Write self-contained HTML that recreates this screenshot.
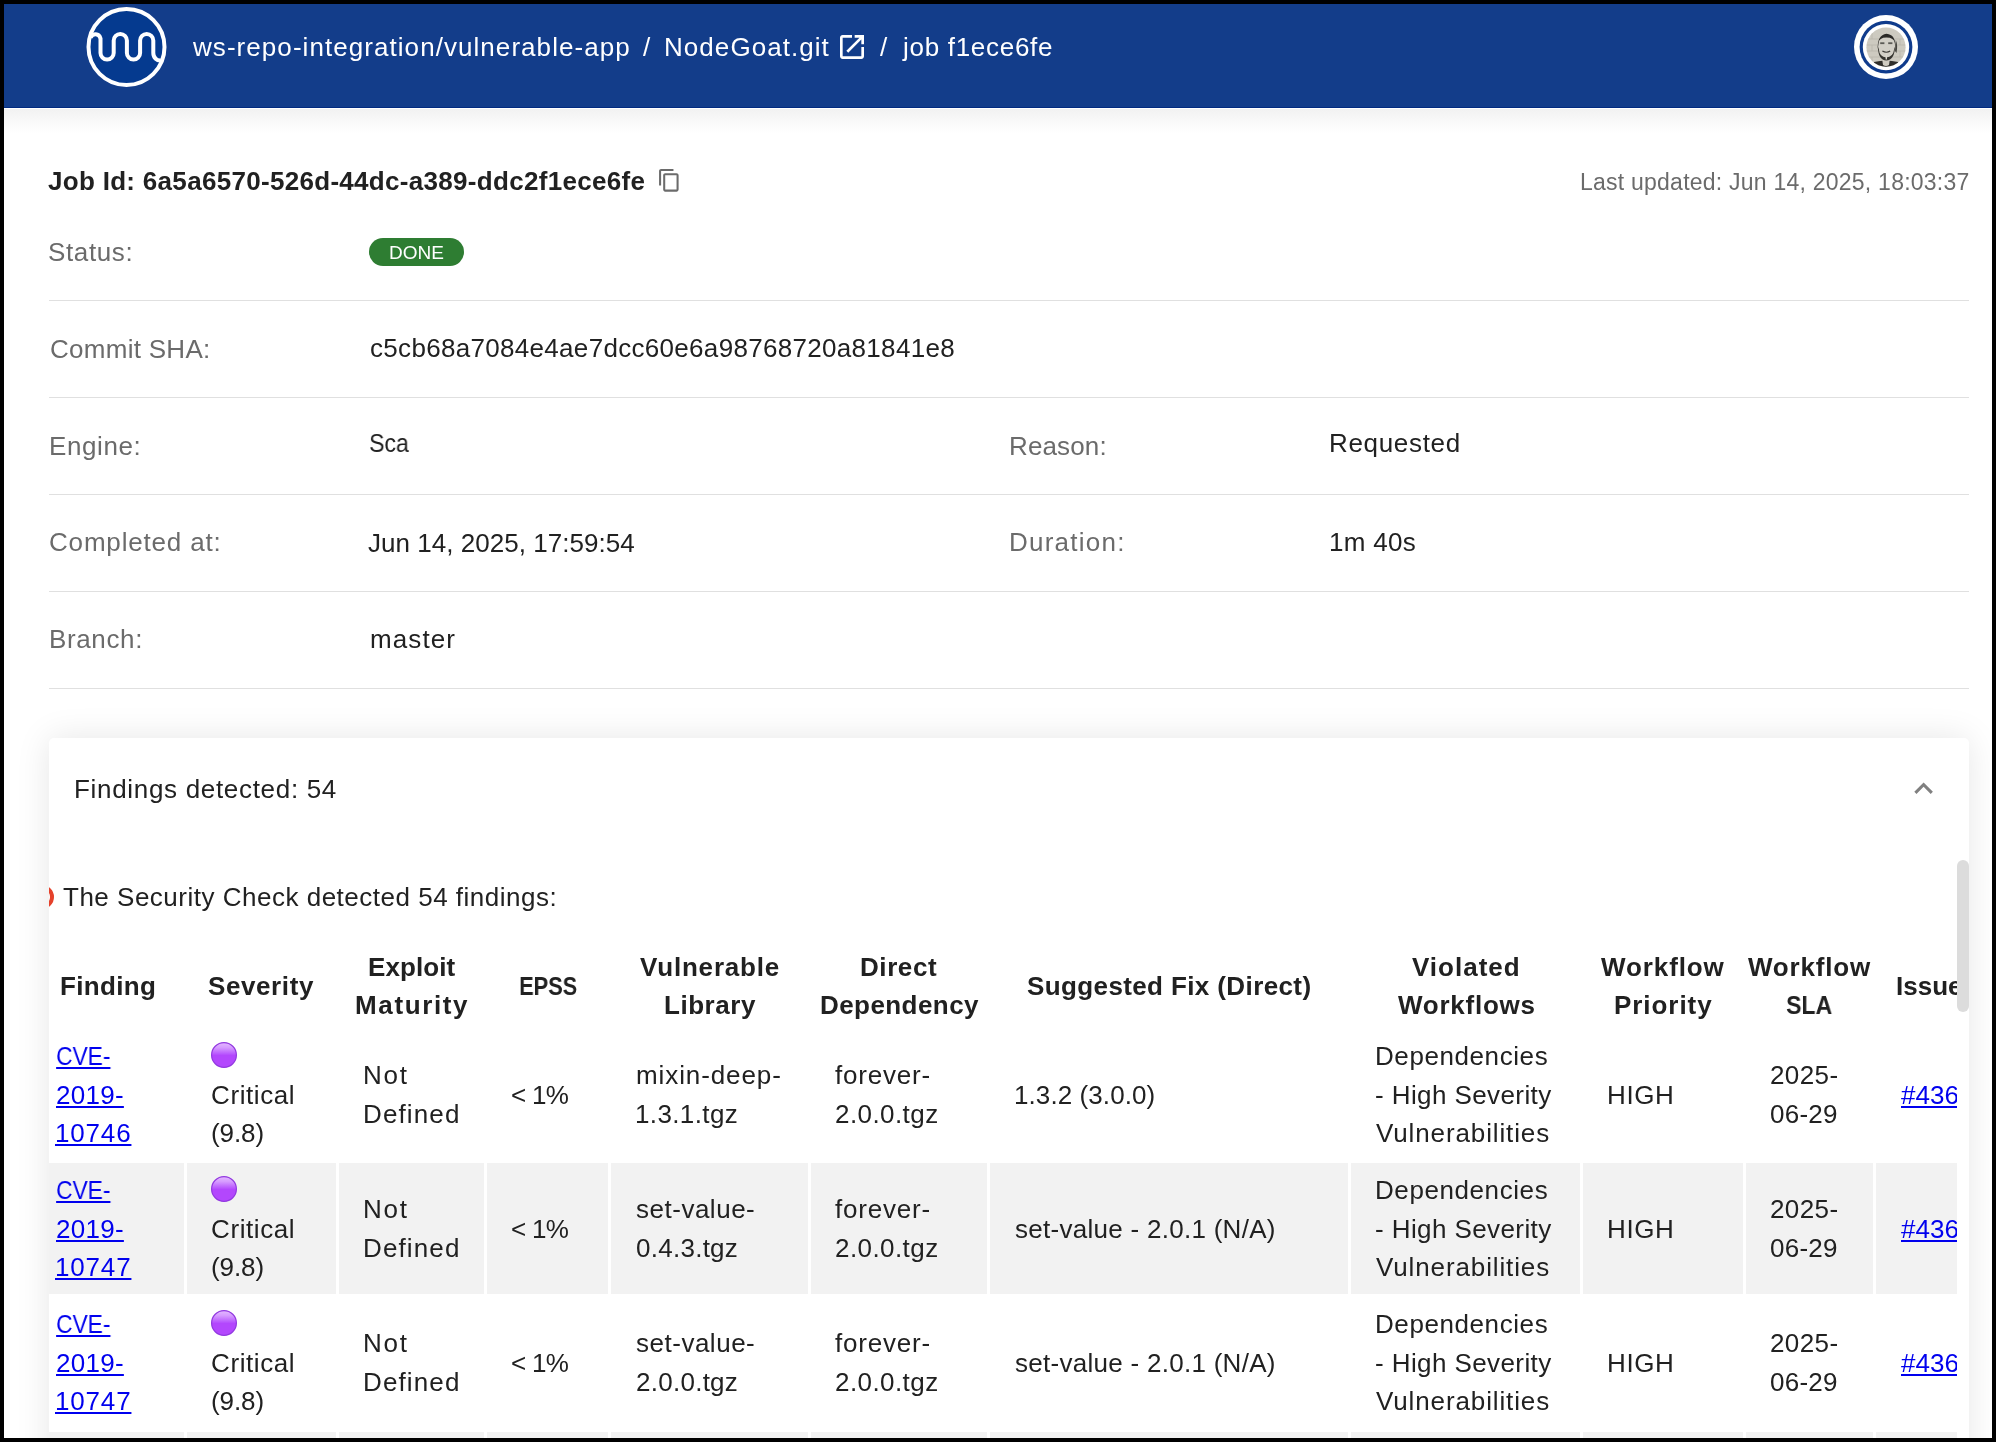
<!DOCTYPE html>
<html><head><meta charset="utf-8"><title>job f1ece6fe</title>
<style>
html,body{margin:0;padding:0}
body{width:1996px;height:1442px;position:relative;overflow:hidden;background:#000;font-family:"Liberation Sans",sans-serif}
.abs{position:absolute;display:block}
.t{position:absolute;line-height:40px;white-space:pre;will-change:transform}
#page{position:absolute;left:4px;top:4px;width:1988px;height:1434px;background:#fff;overflow:hidden}
#hdr{position:absolute;left:4px;top:4px;width:1988px;height:103px;background:#133d8a;border-bottom:1px solid #012a80}
#hsh{position:absolute;left:4px;top:109px;width:1988px;height:24px;background:linear-gradient(#f2f2f2,#ffffff)}
.sep{position:absolute;left:49px;width:1920px;height:1px;background:#e0e0e0}
#badge{position:absolute;left:369px;top:238px;width:95px;height:28px;border-radius:14px;background:#2e7d32}
#card{position:absolute;left:49px;top:738px;width:1920px;height:760px;background:#fff;border-radius:5px;box-shadow:0 0 34px rgba(0,0,0,.1)}
#thumb{position:absolute;left:1957px;top:860px;width:12px;height:152px;border-radius:6px;background:#dcdcdc}
#clip{position:absolute;left:49px;top:850px;width:1908px;height:588px;overflow:hidden}
.g{position:absolute;background:#f2f2f2}
.bk{position:absolute;background:#000}
.pd{position:absolute;width:26px;height:26px;box-sizing:border-box;border-radius:50%;border:1.3px solid #9238e0;background:linear-gradient(#e2b3ff 0%,#d296ff 18%,#bd62fe 38%,#b347fd 50%,#b347fd 100%)}
</style></head><body>
<div id="page"></div>
<div id="hdr"></div>
<div id="hsh"></div>
<svg class="abs" style="left:82px;top:3px" width="90" height="90" viewBox="82 3 90 90">
<circle cx="126.5" cy="47" r="38" fill="#053a8f" stroke="#fff" stroke-width="4"/>
<path d="M90.5 37.5 C93 33 99 33 100.5 38.5 L100.5 53 A6.6 6.6 0 0 0 113.7 53 L113.7 40.5 A6.6 6.6 0 0 1 126.9 40.5 L126.9 53 A6.6 6.6 0 0 0 140.1 53 L140.1 40.5 A6.6 6.6 0 0 1 153.3 40.5 L153.3 53 C153.3 58 157 61 161 60.5" fill="none" stroke="#fff" stroke-width="4" stroke-linecap="butt"/>
</svg>
<svg class="abs" style="left:1854px;top:15px" width="64" height="64" viewBox="0 0 64 64">
<circle cx="32" cy="32" r="32" fill="#fff"/>
<circle cx="32" cy="32.1" r="26.4" fill="#0f3b8c"/>
<circle cx="32" cy="32.1" r="23.2" fill="#fff"/>
<defs><clipPath id="av"><circle cx="32" cy="32.2" r="19.6"/></clipPath></defs>
<g clip-path="url(#av)">
<rect x="0" y="0" width="64" height="64" fill="#cdcac0"/>
<g stroke="#b9b6ac" stroke-width="0.8" fill="none"><path d="M12 24H52M12 30H52M12 36H52M12 42H52M18 18V24M46 24V30M18 30V36M46 36V42M18 42V48"/></g>
<path d="M20 47 Q32 44 44 47 L48 58 L16 58 Z" fill="#2f2e2b"/>
<path d="M28 43 L36 43 L35 50 Q32 52 29 50 Z" fill="#cfcbc1"/>
<ellipse cx="32.3" cy="32" rx="8.6" ry="12.4" fill="#d2cfc6"/>
<path d="M23.8 34 Q23 20 32.5 18.8 Q42 19.5 41.5 33 L40.8 28 Q40 22.5 32.5 22.5 Q25 22.5 24.6 28 Z" fill="#2b2a27"/>
<path d="M23.8 31 Q24 45 32.3 45.6 Q40.6 45 41.2 31 L40.2 34 Q39.2 42 32.3 42.6 Q25.4 42 24.8 34 Z" fill="#35342f"/>
<rect x="31.6" y="38" width="1.4" height="6.5" fill="#d9d6cd"/>
<rect x="26.2" y="27.3" width="4.2" height="1.8" fill="#5b5a55"/><rect x="34.2" y="27.3" width="4.2" height="1.8" fill="#5b5a55"/>
<path d="M28.4 36 Q32.3 38.5 36.2 36" stroke="#3b3a36" stroke-width="1.2" fill="none"/>
<path d="M41.8 25 Q44 30 42.5 38 L41 36 Z" fill="#45443f"/>
</g></svg>
<svg class="abs" style="left:835.9px;top:30.9px" width="32" height="32" viewBox="0 0 24 24"><path fill="#fff" d="M19 19H5V5h7V3H5c-1.11 0-2 .9-2 2v14c0 1.1.89 2 2 2h14c1.1 0 2-.9 2-2v-7h-2v7zM14 3v2h3.59l-9.83 9.83 1.41 1.41L19 6.41V10h2V3h-7z"/></svg>
<svg class="abs" style="left:657.2px;top:168.2px" width="24.7" height="24.7" viewBox="0 0 24 24"><path fill="#6b6b6b" d="M16 1H4c-1.1 0-2 .9-2 2v14h2V3h12V1zm3 4H8c-1.1 0-2 .9-2 2v14c0 1.1.9 2 2 2h11c1.1 0 2-.9 2-2V7c0-1.1-.9-2-2-2zm0 16H8V7h11v14z"/></svg>
<div id="badge"></div>
<div class="sep" style="top:300px"></div><div class="sep" style="top:397px"></div><div class="sep" style="top:494px"></div><div class="sep" style="top:591px"></div><div class="sep" style="top:688px"></div>
<div id="card"></div>
<svg class="abs" style="left:1905.2px;top:770.2px" width="37.2" height="37.2" viewBox="0 0 24 24"><path fill="#808080" d="M12 8l-6 6 1.41 1.41L12 10.83l4.59 4.58L18 14z"/></svg>
<div id="thumb"></div>
<div id="clip">
<div class="g" style="left:-18px;top:313px;width:153px;height:131px"></div><div class="g" style="left:138px;top:313px;width:149px;height:131px"></div><div class="g" style="left:290px;top:313px;width:145px;height:131px"></div><div class="g" style="left:438px;top:313px;width:121px;height:131px"></div><div class="g" style="left:562px;top:313px;width:197px;height:131px"></div><div class="g" style="left:762px;top:313px;width:176px;height:131px"></div><div class="g" style="left:941px;top:313px;width:358px;height:131px"></div><div class="g" style="left:1302px;top:313px;width:229px;height:131px"></div><div class="g" style="left:1534px;top:313px;width:160px;height:131px"></div><div class="g" style="left:1697px;top:313px;width:127px;height:131px"></div><div class="g" style="left:1827px;top:313px;width:224px;height:131px"></div><div class="g" style="left:-18px;top:582px;width:153px;height:131px"></div><div class="g" style="left:138px;top:582px;width:149px;height:131px"></div><div class="g" style="left:290px;top:582px;width:145px;height:131px"></div><div class="g" style="left:438px;top:582px;width:121px;height:131px"></div><div class="g" style="left:562px;top:582px;width:197px;height:131px"></div><div class="g" style="left:762px;top:582px;width:176px;height:131px"></div><div class="g" style="left:941px;top:582px;width:358px;height:131px"></div><div class="g" style="left:1302px;top:582px;width:229px;height:131px"></div><div class="g" style="left:1534px;top:582px;width:160px;height:131px"></div><div class="g" style="left:1697px;top:582px;width:127px;height:131px"></div><div class="g" style="left:1827px;top:582px;width:224px;height:131px"></div>
<svg width="0" height="0" style="position:absolute"><defs><linearGradient id="pg" x1="0" y1="0" x2="0" y2="1"><stop offset="0" stop-color="#e4b8ff"/><stop offset="0.2" stop-color="#d69cff"/><stop offset="0.42" stop-color="#bd62fe"/><stop offset="0.52" stop-color="#b347fd"/><stop offset="1" stop-color="#b347fd"/></linearGradient></defs></svg>
<svg class="abs" style="left:162px;top:192.0px" width="26" height="26" viewBox="0 0 26 26"><circle cx="13" cy="13" r="12.4" fill="url(#pg)" stroke="#9238e0" stroke-width="1.2"/></svg><svg class="abs" style="left:162px;top:326.0px" width="26" height="26" viewBox="0 0 26 26"><circle cx="13" cy="13" r="12.4" fill="url(#pg)" stroke="#9238e0" stroke-width="1.2"/></svg><svg class="abs" style="left:162px;top:460.0px" width="26" height="26" viewBox="0 0 26 26"><circle cx="13" cy="13" r="12.4" fill="url(#pg)" stroke="#9238e0" stroke-width="1.2"/></svg>
<svg class="abs" style="left:0px;top:30px" width="60" height="40" viewBox="49 880 60 40"><circle cx="42" cy="897" r="10" fill="none" stroke="#e5412b" stroke-width="4"/></svg>
<span class="t" style="left:14.40px;top:27.00px;font-size:26px;color:#212121;letter-spacing:0.505px">The Security Check detected 54 findings:</span><span class="t" style="left:10.60px;top:116.00px;font-size:26px;color:#212121;letter-spacing:0.35px;font-weight:700">Finding</span><span class="t" style="left:159.20px;top:116.00px;font-size:26px;color:#212121;letter-spacing:0.6px;font-weight:700">Severity</span><span class="t" style="left:318.60px;top:97.00px;font-size:26px;color:#212121;letter-spacing:0.1px;font-weight:700">Exploit</span><span class="t" style="left:306.40px;top:135.00px;font-size:26px;color:#212121;letter-spacing:1.629px;font-weight:700">Maturity</span><span class="t" style="left:469.50px;top:116.00px;font-size:26px;color:#212121;letter-spacing:0.0px;font-weight:700;transform:scaleX(0.8368);transform-origin:1px 0">EPSS</span><span class="t" style="left:591.30px;top:97.00px;font-size:26px;color:#212121;letter-spacing:0.811px;font-weight:700">Vulnerable</span><span class="t" style="left:614.80px;top:135.00px;font-size:26px;color:#212121;letter-spacing:0.533px;font-weight:700">Library</span><span class="t" style="left:811.20px;top:97.00px;font-size:26px;color:#212121;letter-spacing:0.58px;font-weight:700">Direct</span><span class="t" style="left:770.60px;top:135.00px;font-size:26px;color:#212121;letter-spacing:0.433px;font-weight:700">Dependency</span><span class="t" style="left:978.00px;top:116.00px;font-size:26px;color:#212121;letter-spacing:0.386px;font-weight:700">Suggested Fix (Direct)</span><span class="t" style="left:1363.00px;top:97.00px;font-size:26px;color:#212121;letter-spacing:1.0px;font-weight:700">Violated</span><span class="t" style="left:1349.00px;top:135.00px;font-size:26px;color:#212121;letter-spacing:0.75px;font-weight:700">Workflows</span><span class="t" style="left:1552.00px;top:97.00px;font-size:26px;color:#212121;letter-spacing:0.9px;font-weight:700">Workflow</span><span class="t" style="left:1565.00px;top:135.00px;font-size:26px;color:#212121;letter-spacing:0.943px;font-weight:700">Priority</span><span class="t" style="left:1699.00px;top:97.00px;font-size:26px;color:#212121;letter-spacing:0.8px;font-weight:700">Workflow</span><span class="t" style="left:1737.00px;top:135.00px;font-size:26px;color:#212121;letter-spacing:0.0px;font-weight:700;transform:scaleX(0.8863);transform-origin:1px 0">SLA</span><span class="t" style="left:1846.90px;top:116.00px;font-size:26px;color:#212121;letter-spacing:0.0px;font-weight:700">Issue</span><span class="t" style="left:6.70px;top:186.00px;font-size:26px;color:#0000ee;letter-spacing:0.0px;transform:scaleX(0.875);transform-origin:1px 0;text-decoration:underline;text-decoration-thickness:2px;text-underline-offset:2px">CVE-</span><span class="t" style="left:6.70px;top:225.00px;font-size:26px;color:#0000ee;letter-spacing:0.275px;text-decoration:underline;text-decoration-thickness:2px;text-underline-offset:2px">2019-</span><span class="t" style="left:5.70px;top:263.00px;font-size:26px;color:#0000ee;letter-spacing:0.825px;text-decoration:underline;text-decoration-thickness:2px;text-underline-offset:2px">10746</span><span class="t" style="left:162.20px;top:225.00px;font-size:26px;color:#212121;letter-spacing:0.6px">Critical</span><span class="t" style="left:161.80px;top:263.00px;font-size:26px;color:#212121;letter-spacing:-0.1px">(9.8)</span><span class="t" style="left:313.70px;top:205.00px;font-size:26px;color:#212121;letter-spacing:1.75px">Not</span><span class="t" style="left:313.70px;top:244.00px;font-size:26px;color:#212121;letter-spacing:1.133px">Defined</span><span class="t" style="left:462.00px;top:225.00px;font-size:26px;color:#212121;letter-spacing:-0.667px">&lt; 1%</span><span class="t" style="left:587.00px;top:205.00px;font-size:26px;color:#212121;letter-spacing:0.9px">mixin-deep-</span><span class="t" style="left:586.40px;top:244.00px;font-size:26px;color:#212121;letter-spacing:0.375px">1.3.1.tgz</span><span class="t" style="left:786.30px;top:205.00px;font-size:26px;color:#212121;letter-spacing:0.786px">forever-</span><span class="t" style="left:786.00px;top:244.00px;font-size:26px;color:#212121;letter-spacing:0.425px">2.0.0.tgz</span><span class="t" style="left:965.00px;top:225.00px;font-size:26px;color:#212121;letter-spacing:0.083px">1.3.2 (3.0.0)</span><span class="t" style="left:1326.40px;top:186.00px;font-size:26px;color:#212121;letter-spacing:0.582px">Dependencies</span><span class="t" style="left:1325.90px;top:225.00px;font-size:26px;color:#212121;letter-spacing:0.407px">- High Severity</span><span class="t" style="left:1326.50px;top:263.00px;font-size:26px;color:#212121;letter-spacing:0.879px">Vulnerabilities</span><span class="t" style="left:1557.70px;top:225.00px;font-size:26px;color:#212121;letter-spacing:0.6px">HIGH</span><span class="t" style="left:1720.50px;top:205.00px;font-size:26px;color:#212121;letter-spacing:0.4px">2025-</span><span class="t" style="left:1720.50px;top:244.00px;font-size:26px;color:#212121;letter-spacing:0.25px">06-29</span><span class="t" style="left:1851.70px;top:225.00px;font-size:26px;color:#0000ee;letter-spacing:0.0px;text-decoration:underline;text-decoration-thickness:2px;text-underline-offset:2px">#4366</span><span class="t" style="left:6.70px;top:320.00px;font-size:26px;color:#0000ee;letter-spacing:0.0px;transform:scaleX(0.875);transform-origin:1px 0;text-decoration:underline;text-decoration-thickness:2px;text-underline-offset:2px">CVE-</span><span class="t" style="left:6.70px;top:359.00px;font-size:26px;color:#0000ee;letter-spacing:0.275px;text-decoration:underline;text-decoration-thickness:2px;text-underline-offset:2px">2019-</span><span class="t" style="left:5.70px;top:397.00px;font-size:26px;color:#0000ee;letter-spacing:0.825px;text-decoration:underline;text-decoration-thickness:2px;text-underline-offset:2px">10747</span><span class="t" style="left:162.20px;top:359.00px;font-size:26px;color:#212121;letter-spacing:0.6px">Critical</span><span class="t" style="left:161.80px;top:397.00px;font-size:26px;color:#212121;letter-spacing:-0.1px">(9.8)</span><span class="t" style="left:313.70px;top:339.00px;font-size:26px;color:#212121;letter-spacing:1.75px">Not</span><span class="t" style="left:313.70px;top:378.00px;font-size:26px;color:#212121;letter-spacing:1.133px">Defined</span><span class="t" style="left:462.00px;top:359.00px;font-size:26px;color:#212121;letter-spacing:-0.667px">&lt; 1%</span><span class="t" style="left:587.00px;top:339.00px;font-size:26px;color:#212121;letter-spacing:0.511px">set-value-</span><span class="t" style="left:587.40px;top:378.00px;font-size:26px;color:#212121;letter-spacing:0.263px">0.4.3.tgz</span><span class="t" style="left:786.30px;top:339.00px;font-size:26px;color:#212121;letter-spacing:0.786px">forever-</span><span class="t" style="left:786.00px;top:378.00px;font-size:26px;color:#212121;letter-spacing:0.425px">2.0.0.tgz</span><span class="t" style="left:966.00px;top:359.00px;font-size:26px;color:#212121;letter-spacing:0.277px">set-value - 2.0.1 (N/A)</span><span class="t" style="left:1326.40px;top:320.00px;font-size:26px;color:#212121;letter-spacing:0.582px">Dependencies</span><span class="t" style="left:1325.90px;top:359.00px;font-size:26px;color:#212121;letter-spacing:0.407px">- High Severity</span><span class="t" style="left:1326.50px;top:397.00px;font-size:26px;color:#212121;letter-spacing:0.879px">Vulnerabilities</span><span class="t" style="left:1557.70px;top:359.00px;font-size:26px;color:#212121;letter-spacing:0.6px">HIGH</span><span class="t" style="left:1720.50px;top:339.00px;font-size:26px;color:#212121;letter-spacing:0.4px">2025-</span><span class="t" style="left:1720.50px;top:378.00px;font-size:26px;color:#212121;letter-spacing:0.25px">06-29</span><span class="t" style="left:1851.70px;top:359.00px;font-size:26px;color:#0000ee;letter-spacing:0.0px;text-decoration:underline;text-decoration-thickness:2px;text-underline-offset:2px">#4366</span><span class="t" style="left:6.70px;top:454.00px;font-size:26px;color:#0000ee;letter-spacing:0.0px;transform:scaleX(0.875);transform-origin:1px 0;text-decoration:underline;text-decoration-thickness:2px;text-underline-offset:2px">CVE-</span><span class="t" style="left:6.70px;top:493.00px;font-size:26px;color:#0000ee;letter-spacing:0.275px;text-decoration:underline;text-decoration-thickness:2px;text-underline-offset:2px">2019-</span><span class="t" style="left:5.70px;top:531.00px;font-size:26px;color:#0000ee;letter-spacing:0.825px;text-decoration:underline;text-decoration-thickness:2px;text-underline-offset:2px">10747</span><span class="t" style="left:162.20px;top:493.00px;font-size:26px;color:#212121;letter-spacing:0.6px">Critical</span><span class="t" style="left:161.80px;top:531.00px;font-size:26px;color:#212121;letter-spacing:-0.1px">(9.8)</span><span class="t" style="left:313.70px;top:473.00px;font-size:26px;color:#212121;letter-spacing:1.75px">Not</span><span class="t" style="left:313.70px;top:512.00px;font-size:26px;color:#212121;letter-spacing:1.133px">Defined</span><span class="t" style="left:462.00px;top:493.00px;font-size:26px;color:#212121;letter-spacing:-0.667px">&lt; 1%</span><span class="t" style="left:587.00px;top:473.00px;font-size:26px;color:#212121;letter-spacing:0.511px">set-value-</span><span class="t" style="left:587.40px;top:512.00px;font-size:26px;color:#212121;letter-spacing:0.263px">2.0.0.tgz</span><span class="t" style="left:786.30px;top:473.00px;font-size:26px;color:#212121;letter-spacing:0.786px">forever-</span><span class="t" style="left:786.00px;top:512.00px;font-size:26px;color:#212121;letter-spacing:0.425px">2.0.0.tgz</span><span class="t" style="left:966.00px;top:493.00px;font-size:26px;color:#212121;letter-spacing:0.277px">set-value - 2.0.1 (N/A)</span><span class="t" style="left:1326.40px;top:454.00px;font-size:26px;color:#212121;letter-spacing:0.582px">Dependencies</span><span class="t" style="left:1325.90px;top:493.00px;font-size:26px;color:#212121;letter-spacing:0.407px">- High Severity</span><span class="t" style="left:1326.50px;top:531.00px;font-size:26px;color:#212121;letter-spacing:0.879px">Vulnerabilities</span><span class="t" style="left:1557.70px;top:493.00px;font-size:26px;color:#212121;letter-spacing:0.6px">HIGH</span><span class="t" style="left:1720.50px;top:473.00px;font-size:26px;color:#212121;letter-spacing:0.4px">2025-</span><span class="t" style="left:1720.50px;top:512.00px;font-size:26px;color:#212121;letter-spacing:0.25px">06-29</span><span class="t" style="left:1851.70px;top:493.00px;font-size:26px;color:#0000ee;letter-spacing:0.0px;text-decoration:underline;text-decoration-thickness:2px;text-underline-offset:2px">#4366</span>
</div>
<span class="t" style="left:193.10px;top:27.00px;font-size:26px;color:#ffffff;letter-spacing:1.058px">ws-repo-integration/vulnerable-app</span><span class="t" style="left:643.00px;top:27.00px;font-size:26px;color:#ffffff;letter-spacing:0.0px">/</span><span class="t" style="left:664.00px;top:27.00px;font-size:26px;color:#ffffff;letter-spacing:1.055px">NodeGoat.git</span><span class="t" style="left:880.40px;top:27.00px;font-size:26px;color:#ffffff;letter-spacing:0.0px">/</span><span class="t" style="left:902.60px;top:27.00px;font-size:26px;color:#ffffff;letter-spacing:0.709px">job f1ece6fe</span><span class="t" style="left:47.50px;top:161.00px;font-size:26px;color:#212121;letter-spacing:0.302px;font-weight:700">Job Id: 6a5a6570-526d-44dc-a389-ddc2f1ece6fe</span><span class="t" style="left:1579.80px;top:162.00px;font-size:23px;color:#6b6b6b;letter-spacing:0.234px">Last updated: Jun 14, 2025, 18:03:37</span><span class="t" style="left:48.30px;top:232.00px;font-size:26px;color:#6b6b6b;letter-spacing:0.617px">Status:</span><span class="t" style="left:388.50px;top:233.00px;font-size:19px;color:#ffffff;letter-spacing:0.033px">DONE</span><span class="t" style="left:49.50px;top:329.00px;font-size:26px;color:#6b6b6b;letter-spacing:0.28px">Commit SHA:</span><span class="t" style="left:369.50px;top:328.00px;font-size:26px;color:#212121;letter-spacing:0.31px">c5cb68a7084e4ae7dcc60e6a98768720a81841e8</span><span class="t" style="left:48.60px;top:426.00px;font-size:26px;color:#6b6b6b;letter-spacing:0.6px">Engine:</span><span class="t" style="left:368.60px;top:423.00px;font-size:26px;color:#212121;letter-spacing:0.0px;transform:scaleX(0.8886);transform-origin:1px 0">Sca</span><span class="t" style="left:1008.80px;top:426.00px;font-size:26px;color:#6b6b6b;letter-spacing:0.133px">Reason:</span><span class="t" style="left:1328.70px;top:423.00px;font-size:26px;color:#212121;letter-spacing:0.675px">Requested</span><span class="t" style="left:49.40px;top:522.00px;font-size:26px;color:#6b6b6b;letter-spacing:0.825px">Completed at:</span><span class="t" style="left:368.00px;top:523.00px;font-size:26px;color:#212121;letter-spacing:0.033px">Jun 14, 2025, 17:59:54</span><span class="t" style="left:1008.80px;top:522.00px;font-size:26px;color:#6b6b6b;letter-spacing:1.238px">Duration:</span><span class="t" style="left:1329.40px;top:522.00px;font-size:26px;color:#212121;letter-spacing:0.32px">1m 40s</span><span class="t" style="left:48.90px;top:619.00px;font-size:26px;color:#6b6b6b;letter-spacing:0.633px">Branch:</span><span class="t" style="left:369.80px;top:619.00px;font-size:26px;color:#212121;letter-spacing:1.1px">master</span><span class="t" style="left:74.10px;top:769.00px;font-size:26px;color:#212121;letter-spacing:0.685px">Findings detected: 54</span>
<div class="bk" style="left:0;top:0;width:1996px;height:4px"></div>
<div class="bk" style="left:0;top:1438px;width:1996px;height:4px"></div>
<div class="bk" style="left:0;top:0;width:4px;height:1442px"></div>
<div class="bk" style="left:1992px;top:0;width:4px;height:1442px"></div>
</body></html>
